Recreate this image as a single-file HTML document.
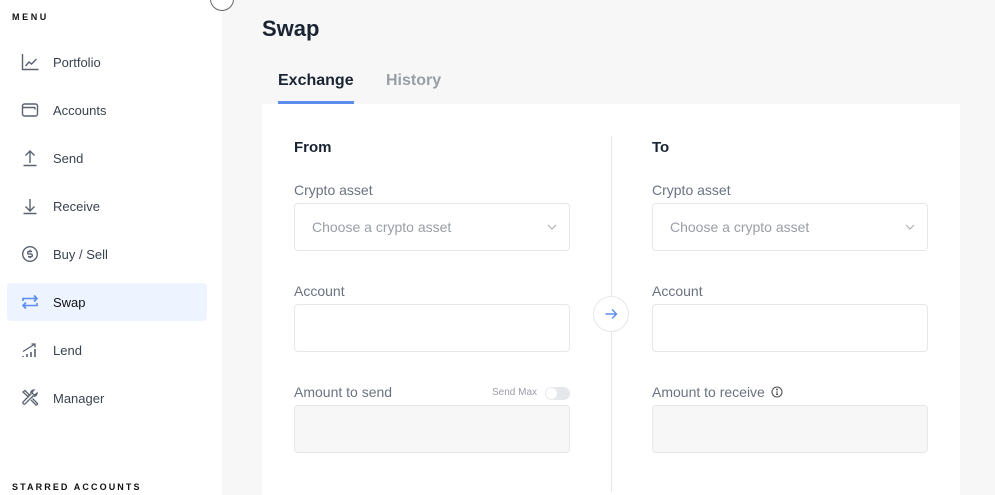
<!DOCTYPE html>
<html><head><meta charset="utf-8"><style>
*{box-sizing:border-box;margin:0;padding:0}
html,body{width:995px;height:495px;overflow:hidden}
body{background:#f7f7f8;font-family:"Liberation Sans",sans-serif;position:relative;color:#1a2433}
.side{position:absolute;left:0;top:0;width:222px;height:495px;background:#fff}
.cap{position:absolute;left:12px;font-size:9px;font-weight:bold;letter-spacing:2.6px;color:#111}
.item{position:absolute;left:7px;width:200px;height:38px;border-radius:4px;display:flex;align-items:center}
.item svg{position:absolute;left:14px;top:10px}
.item span{position:absolute;left:46px;font-size:13px;color:#3a4250}
.item.act{background:#edf3ff}
.item.act span{color:#111}
.t{position:absolute}
.lbl{position:absolute;font-size:14px;color:#6b7280}
.box{position:absolute;width:276px;height:48px;border:1px solid #e5e7eb;border-radius:4px;background:#fff}
.box.g{background:#f7f7f8}
</style></head><body>
<div class="side">
<div class="cap" style="top:12px">MENU</div>
<div class="item" style="top:43px"><svg width="18" height="18" viewBox="0 0 18 18" fill="none" stroke="#5a6270" stroke-width="1.4"><path d="M1.5 1v15.5h16"/><path d="M4.5 13l3.5-4 2.5 2 5-5"/></svg><span>Portfolio</span></div>
<div class="item" style="top:91px"><svg width="18" height="18" viewBox="0 0 18 18" fill="none" stroke="#5a6270" stroke-width="1.4"><rect x="1.5" y="3" width="15" height="12" rx="2"/><path d="M1.5 6.5h12.5M14 6.5v2"/></svg><span>Accounts</span></div>
<div class="item" style="top:139px"><svg width="18" height="18" viewBox="0 0 18 18" fill="none" stroke="#5a6270" stroke-width="1.4"><path d="M9 14V2M4.5 6.5L9 2l4.5 4.5M2.5 16.5h13"/></svg><span>Send</span></div>
<div class="item" style="top:187px"><svg width="18" height="18" viewBox="0 0 18 18" fill="none" stroke="#5a6270" stroke-width="1.4"><path d="M9 2v12M4.5 9.5L9 14l4.5-4.5M2.5 16.5h13"/></svg><span>Receive</span></div>
<div class="item" style="top:235px"><svg width="18" height="18" viewBox="0 0 18 18" fill="none" stroke="#5a6270" stroke-width="1.4"><circle cx="9" cy="9" r="7.3"/><path d="M11 6.5H8a1.3 1.3 0 0 0 0 2.6h2a1.3 1.3 0 0 1 0 2.6H7M9 4.8v1.7M9 11.7v1.6"/></svg><span>Buy / Sell</span></div>
<div class="item act" style="top:283px"><svg width="18" height="18" viewBox="0 0 18 18" fill="none" stroke="#5b8def" stroke-width="1.6"><path d="M2 8V5.5h14M13 2.5l3 3-3 3M16 10v2.5H2M5 15.5l-3-3 3-3"/></svg><span>Swap</span></div>
<div class="item" style="top:331px"><svg width="18" height="18" viewBox="0 0 18 18" fill="none" stroke="#5a6270" stroke-width="1.6"><path d="M2 16v-1M6 16v-3M10 16v-5M14 16V8"/><path d="M2 10.5L14 3M10.5 3H14v3.5" stroke-width="1.3"/></svg><span>Lend</span></div>
<div class="item" style="top:379px"><svg width="18" height="18" viewBox="0 0 18 18" fill="none" stroke="#5a6270" stroke-width="1.3"><path d="M2 3l2-1.5 4.5 4.5-1.5 1.5zM10 11l5 5a1.3 1.3 0 0 0 1.5-1.5l-5-5"/><path d="M16 4a3 3 0 0 1-4 3L4 15a1.5 1.5 0 0 1-2-2l8-8a3 3 0 0 1 3-4l-2 2 1 2 2 1z"/></svg><span>Manager</span></div>
<div class="cap" style="top:482px;letter-spacing:2.1px">STARRED ACCOUNTS</div>
</div>
<div class="t" style="left:210px;top:-13px;width:24px;height:24px;border:1px solid #666;border-radius:50%;background:#fff"></div>
<div class="t" style="left:262px;top:16px;font-size:22px;font-weight:bold;color:#1a2433">Swap</div>
<div class="t" style="left:278px;top:72px;font-size:16px;font-weight:bold;color:#1a2433">Exchange</div>
<div class="t" style="left:278px;top:101px;width:76px;height:3px;background:#5b8def"></div>
<div class="t" style="left:386px;top:72px;font-size:16px;font-weight:bold;color:#999ea6">History</div>
<div class="t" style="left:262px;top:104px;width:698px;height:391px;background:#fff"></div>
<div class="t" style="left:611px;top:136px;width:1px;height:356px;background:#e5e7eb"></div>
<div class="t" style="left:593px;top:296px;width:36px;height:36px;border:1px solid #e5e7eb;border-radius:50%;background:#fff"><svg style="position:absolute;left:10px;top:10px" width="14" height="14" viewBox="0 0 14 14" fill="none" stroke="#5b8def" stroke-width="1.4"><path d="M1.5 7h11M8 2.5L12.5 7 8 11.5"/></svg></div>

<div class="t" style="left:294px;top:139px;font-size:15px;font-weight:bold;color:#1a2433">From</div>
<div class="lbl" style="left:294px;top:182px">Crypto asset</div>
<div class="box" style="left:294px;top:203px"><span style="position:absolute;left:17px;top:15px;font-size:14px;color:#999ea6">Choose a crypto asset</span><svg style="position:absolute;left:252px;top:20px" width="10" height="6" viewBox="0 0 10 6" fill="none" stroke="#aaa"><path d="M1 1l4 4 4-4"/></svg></div>
<div class="lbl" style="left:294px;top:283px">Account</div>
<div class="box" style="left:294px;top:304px"></div>
<div class="lbl" style="left:294px;top:384px">Amount to send</div>
<div class="t" style="left:492px;top:387px;font-size:10px;color:#999ea6">Send Max</div>
<div class="t" style="left:545px;top:387px;width:25px;height:13px;border-radius:7px;background:#e5e7eb"><div style="position:absolute;left:1px;top:1px;width:11px;height:11px;border-radius:50%;background:#fff"></div></div>
<div class="box g" style="left:294px;top:405px"></div>

<div class="t" style="left:652px;top:139px;font-size:15px;font-weight:bold;color:#1a2433">To</div>
<div class="lbl" style="left:652px;top:182px">Crypto asset</div>
<div class="box" style="left:652px;top:203px"><span style="position:absolute;left:17px;top:15px;font-size:14px;color:#999ea6">Choose a crypto asset</span><svg style="position:absolute;left:252px;top:20px" width="10" height="6" viewBox="0 0 10 6" fill="none" stroke="#aaa"><path d="M1 1l4 4 4-4"/></svg></div>
<div class="lbl" style="left:652px;top:283px">Account</div>
<div class="box" style="left:652px;top:304px"></div>
<div class="lbl" style="left:652px;top:384px">Amount to receive</div>
<svg class="t" style="left:771px;top:386px" width="12" height="12" viewBox="0 0 12 12" fill="none" stroke="#555" stroke-width="1.1"><circle cx="6" cy="6" r="5"/><path d="M6 5.3v3.2M5 8.5h2"/><circle cx="6" cy="3.5" r=".4" fill="#555"/></svg>
<div class="box g" style="left:652px;top:405px"></div>
</body></html>
